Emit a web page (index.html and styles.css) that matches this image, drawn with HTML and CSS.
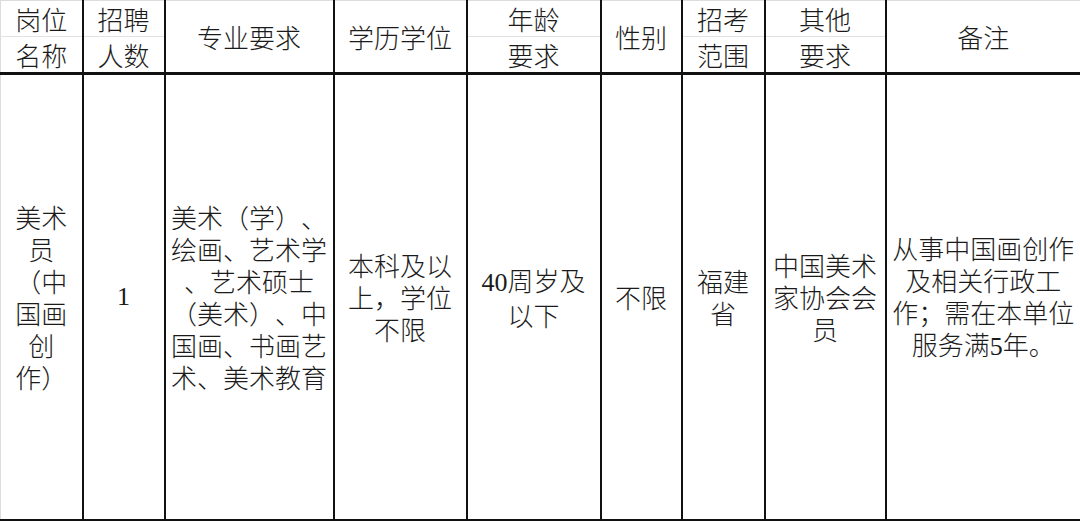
FILE: index.html
```html
<!DOCTYPE html>
<html lang="zh-CN">
<head>
<meta charset="utf-8">
<title>岗位表</title>
<link rel="stylesheet" href="styles.css">
</head>
<body>
<table class="grid">
  <colgroup>
    <col class="c1"><col class="c2"><col class="c3"><col class="c4"><col class="c5">
    <col class="c6"><col class="c7"><col class="c8"><col class="c9">
  </colgroup>
  <thead>
    <tr class="h1">
      <th class="split">岗位</th>
      <th class="split">招聘</th>
      <th rowspan="2">专业要求</th>
      <th rowspan="2">学历学位</th>
      <th class="split">年龄</th>
      <th rowspan="2">性别</th>
      <th class="split">招考</th>
      <th class="split">其他</th>
      <th rowspan="2">备注</th>
    </tr>
    <tr class="h2">
      <th>名称</th>
      <th>人数</th>
      <th>要求</th>
      <th>范围</th>
      <th>要求</th>
    </tr>
  </thead>
  <tbody>
    <tr class="body">
      <td>美术<br>员<br>（中<br>国画<br>创<br>作）</td>
      <td class="num">1</td>
      <td>美术（学）、<br>绘画、艺术学<br>、艺术硕士<br>（美术）、中<br>国画、书画艺<br>术、美术教育</td>
      <td>本科及以<br>上，学位<br>不限</td>
      <td><span class="num">40</span>周岁及<br>以下</td>
      <td>不限</td>
      <td>福建<br>省</td>
      <td>中国美术<br>家协会会<br>员</td>
      <td>从事中国画创作<br>及相关行政工<br>作；需在本单位<br>服务满<span class="num">5</span>年。</td>
    </tr>
  </tbody>
</table>
</body>
</html>
```
FILE: styles.css
```css
html, body {
  margin: 0;
  padding: 0;
  background: #ffffff;
}

body {
  width: 1080px;
  height: 522px;
  overflow: hidden;
  font-family: "Noto Sans CJK SC", "Liberation Serif", sans-serif;
  color: #1b1b1b;
  text-spacing-trim: space-all;
  font-feature-settings: "fwid" 1;
}

.grid {
  width: 1080px;
  border-collapse: collapse;
  table-layout: fixed;
  border-top: 1px solid #dcdcdc;
  border-left: 1px solid #dcdcdc;
  border-right: 1px solid #dcdcdc;
}

.c1 { width: 82px; }
.c2 { width: 82px; }
.c3 { width: 169px; }
.c4 { width: 133px; }
.c5 { width: 134px; }
.c6 { width: 81px; }
.c7 { width: 83px; }
.c8 { width: 121px; }
.c9 { width: 195px; }

.grid th,
.grid td {
  padding: 0;
  text-align: center;
  vertical-align: middle;
  white-space: nowrap;
  font-weight: 300;
  font-size: 26px;
  border-left: 2px solid #111;
  border-right: 2px solid #111;
}

.grid th:first-child,
.grid td:first-child {
  border-left: 1px solid #dcdcdc;
}

.grid th:last-child,
.grid td:last-child {
  border-right: 1px solid #dcdcdc;
}

.h1 th {
  height: 35px;
  line-height: 35px;
}

.h1 th.split {
  border-bottom: 1px solid #e2e2e2;
}

.h2 th {
  height: 35px;
  line-height: 35px;
  border-bottom: 3px solid #111;
}

.h1 th[rowspan] {
  border-bottom: 3px solid #111;
}

.h2 th:first-child {
  border-left: 1px solid #dcdcdc;
}

.h2 th:nth-child(2),
.h2 th:nth-child(3),
.h2 th:nth-child(4),
.h2 th:nth-child(5) {
  border-left: 2px solid #111;
}

.body td {
  height: 444px;
  line-height: 32px;
  border-bottom: 2px solid #111;
}

.num {
  font-family: "Liberation Serif", serif;
  font-size: 26px;
  font-weight: 400;
}
```
